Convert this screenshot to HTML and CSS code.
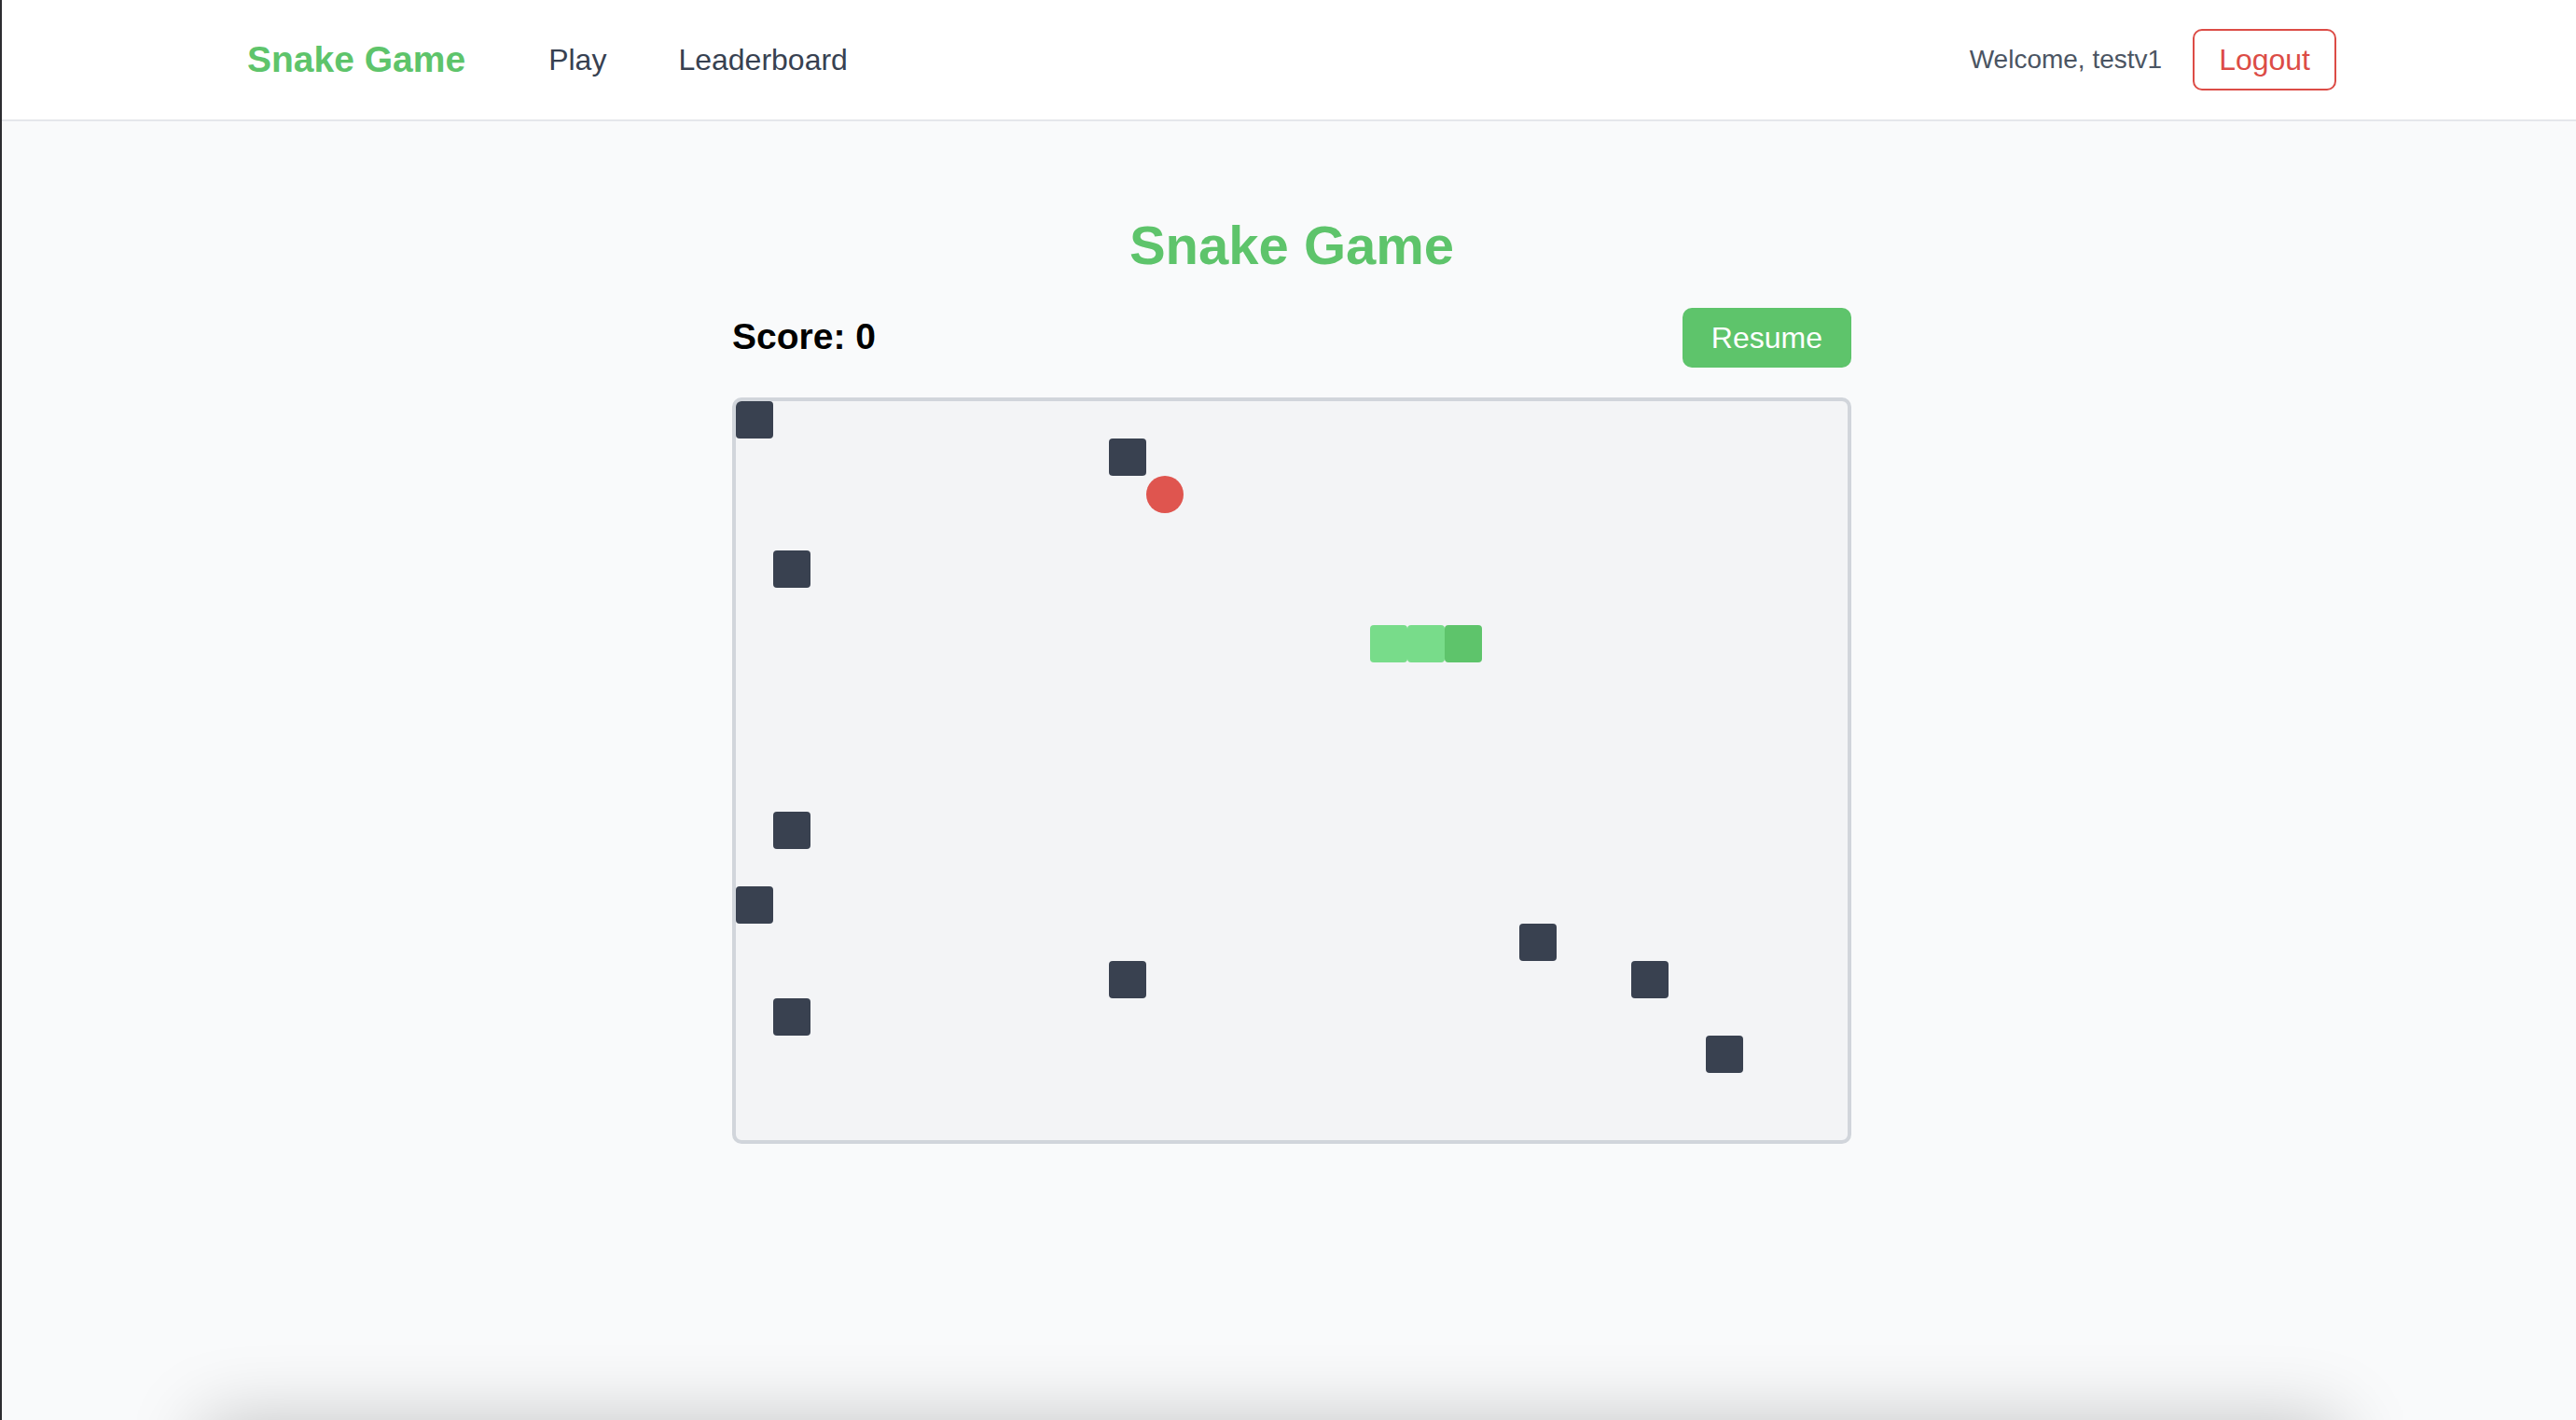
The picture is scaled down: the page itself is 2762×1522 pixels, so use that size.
FILE: index.html
```html
<!DOCTYPE html>
<html lang="en">
<head>
<meta charset="utf-8">
<title>Snake Game</title>
<link rel="stylesheet" href="styles.css">
</head>
<body>
<header class="navbar">
  <div class="nav-inner">
    <div class="nav-left">
      <a class="logo" href="#">Snake Game</a>
      <nav class="nav-links">
        <a href="#">Play</a>
        <a href="#">Leaderboard</a>
      </nav>
    </div>
    <div class="nav-right">
      <span class="welcome">Welcome, testv1</span>
      <button class="btn-logout">Logout</button>
    </div>
  </div>
</header>
<main class="main">
  <section class="game">
    <h1 class="game-title">Snake Game</h1>
    <div class="score-row">
      <div class="score">Score: 0</div>
      <button class="btn-resume">Resume</button>
    </div>
    <div class="board">
      <div class="grid">
        <div class="cell obstacle" style="grid-column:1;grid-row:1"></div>
        <div class="cell obstacle" style="grid-column:11;grid-row:2"></div>
        <div class="cell obstacle" style="grid-column:2;grid-row:5"></div>
        <div class="cell obstacle" style="grid-column:2;grid-row:12"></div>
        <div class="cell obstacle" style="grid-column:1;grid-row:14"></div>
        <div class="cell obstacle" style="grid-column:2;grid-row:17"></div>
        <div class="cell obstacle" style="grid-column:11;grid-row:16"></div>
        <div class="cell obstacle" style="grid-column:22;grid-row:15"></div>
        <div class="cell obstacle" style="grid-column:25;grid-row:16"></div>
        <div class="cell obstacle" style="grid-column:27;grid-row:18"></div>
        <div class="cell food" style="grid-column:12;grid-row:3"></div>
        <div class="cell snake" style="grid-column:18;grid-row:7"></div>
        <div class="cell snake" style="grid-column:19;grid-row:7"></div>
        <div class="cell snake head" style="grid-column:20;grid-row:7"></div>
      </div>
    </div>
  </section>
</main>
<div class="footer-card"></div>
</body>
</html>
```

FILE: styles.css
```css
* { box-sizing: border-box; }

html, body {
  margin: 0;
  padding: 0;
}

body {
  background: #f9fafb;
  border-left: 2px solid #2c2c30;
  font-family: "Liberation Sans", Arial, sans-serif;
  color: #111827;
  overflow: hidden;
}

a { text-decoration: none; }

.navbar {
  background: #ffffff;
  height: 130px;
  border-bottom: 2px solid #e5e7eb;
}

.nav-inner {
  width: 2246px;
  padding-left: 6px;
  margin: 0 auto;
  height: 128px;
  display: flex;
  align-items: center;
  justify-content: space-between;
}

.nav-left {
  display: flex;
  align-items: center;
}

.logo {
  color: #5ec46b;
  font-weight: 700;
  font-size: 39px;
  margin-right: 89px;
}

.nav-links {
  display: flex;
  gap: 77px;
}

.nav-links a {
  color: #374151;
  font-size: 32px;
}

.nav-right {
  display: flex;
  align-items: center;
  gap: 33px;
}

.welcome {
  color: #4b5563;
  font-size: 28px;
}

.btn-logout {
  font-family: inherit;
  font-size: 32px;
  color: #dc4c46;
  background: #ffffff;
  border: 2px solid #dc4c46;
  border-radius: 10px;
  height: 66px;
  padding: 0 26px;
  cursor: pointer;
}

.main {
  min-height: 1392px;
  padding: 100px 0 0 6px;
}

.game {
  width: 1200px;
  margin: 0 auto;
}

.game-title {
  margin: 0 0 34px;
  text-align: center;
  color: #5ec46b;
  font-size: 58px;
  line-height: 66px;
  font-weight: 700;
}

.score-row {
  display: flex;
  align-items: center;
  justify-content: space-between;
  height: 64px;
  margin-bottom: 32px;
}

.score {
  font-size: 39px;
  font-weight: 700;
  color: #000000;
  margin-top: -3px;
}

.btn-resume {
  font-family: inherit;
  font-size: 32px;
  color: #ffffff;
  background: #5ec46b;
  border: none;
  border-radius: 10px;
  height: 64px;
  padding: 0 31px;
  cursor: pointer;
}

.board {
  width: 1200px;
  height: 800px;
  border: 4px solid #d1d5db;
  border-radius: 10px;
  background: #f3f4f6;
  overflow: hidden;
}

.grid {
  display: grid;
  grid-template-columns: repeat(30, 40px);
  grid-template-rows: repeat(20, 40px);
}

.cell {
  width: 40px;
  height: 40px;
}

.obstacle {
  background: #394150;
  border-radius: 4px;
}

.food {
  background: #df554f;
  border-radius: 50%;
}

.snake {
  background: #78dc8a;
  border-radius: 4px;
}

.snake.head {
  background: #5ec46b;
}

.footer-card {
  width: 2290px;
  height: 200px;
  margin: 0 auto;
  position: relative;
  left: -20px;
  background: #f9fafb;
  box-shadow: 0 0 80px rgba(0, 0, 0, 0.22);
}
```
